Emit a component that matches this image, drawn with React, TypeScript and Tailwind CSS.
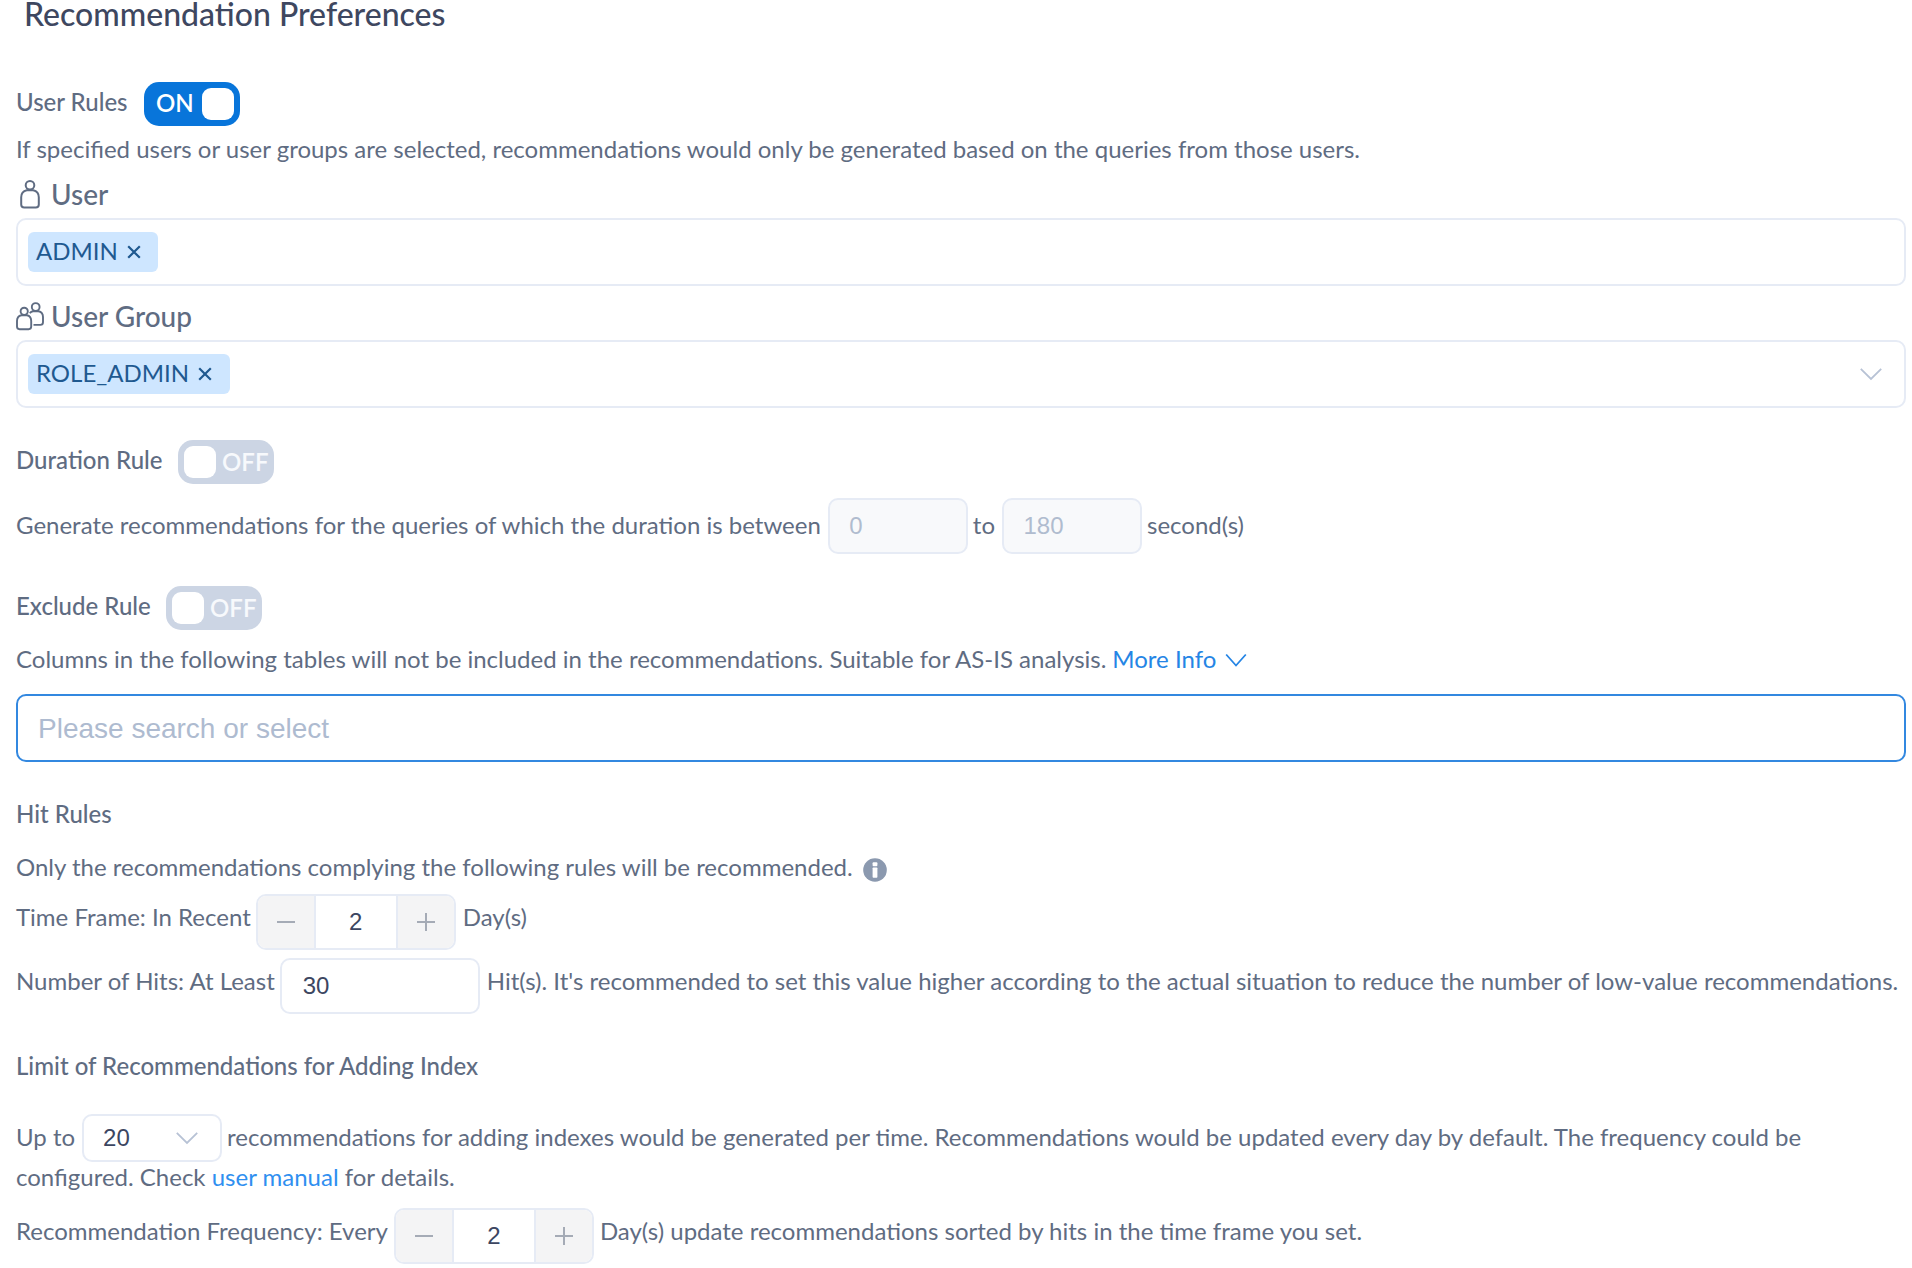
import type { ReactNode } from "react";

function Switch({ on = false }: { on?: boolean }) {
  return on ? (
    <span className="flex h-11 w-24 shrink-0 items-center justify-between rounded-[15px] bg-[#0875da] pr-1.5 pl-[12px] text-[24px] leading-[42px] font-semibold text-white">
      <span className="-mt-0.5">ON</span>
      <span className="size-8 rounded-[9px] bg-white" />
    </span>
  ) : (
    <span className="flex h-11 w-24 shrink-0 items-center rounded-[15px] bg-[#ccd5e4] pl-1.5 text-[24px] leading-[42px] font-semibold text-[#f7f9fc]">
      <span className="mr-[6px] size-8 shrink-0 rounded-[9px] bg-white" />
      <span>OFF</span>
    </span>
  );
}

function Tag({ children }: { children: ReactNode }) {
  return (
    <span className="flex h-10 items-center rounded-md bg-[#cee6ff] pr-[16.500px] pl-2 text-[24px] leading-[38px] text-[#1f5990]">
      <span className="-mt-0.5">{children}</span>
      <svg className="ml-[8px]" width="16" height="16" viewBox="0 0 16 16" fill="none" stroke="currentColor" strokeWidth="2.2">
        <path d="M2.200 2.200l11.600 11.600M13.800 2.200L2.200 13.800" />
      </svg>
    </span>
  );
}

function Chevron({ className = "" }: { className?: string }) {
  return (
    <svg className={className} width="24" height="16" viewBox="0 0 24 16" fill="none" stroke="currentColor" strokeWidth="1.8">
      <path d="M1.800 2.800L12 13L22.200 2.800" />
    </svg>
  );
}

function UserIcon() {
  return (
    <svg className="mr-[7px] shrink-0" width="28" height="32" viewBox="0 0 28 32" fill="none" stroke="currentColor" strokeWidth="2">
      <circle cx="14" cy="7.300" r="4.300" />
      <path d="M10.800 12.200C7.400 12.900 5.200 15.500 5.200 19.300V26.500Q5.200 29.500 8.200 29.500H19.800Q22.800 29.500 22.800 26.500V19.300C22.800 15.500 20.600 12.900 17.200 12.200Z" />
    </svg>
  );
}

function GroupIcon() {
  return (
    <svg className="mr-[7px] shrink-0" width="28" height="32" viewBox="0 0 28 32" fill="none" stroke="currentColor" strokeWidth="1.9">
      <circle cx="8.200" cy="11.300" r="3.600" />
      <path d="M5.500 15.300C2.700 15.900 1 18 1 21V26.600Q1 29.200 3.600 29.200H12.600Q15.200 29.200 15.200 26.600V21C15.200 18 13.700 15.900 10.900 15.300Z" />
      <circle cx="19.700" cy="7" r="3.900" />
      <path d="M13.800 13.200C14.700 12 15.700 11.500 17 11.300H22.400C25.400 11.900 27 14.100 27 17.100V22.300Q27 24.900 24.400 24.900H17.500" />
    </svg>
  );
}

function Stepper({ value }: { value: number }) {
  return (
    <span className="flex h-14 w-[200px] shrink-0 overflow-hidden rounded-[10px] border-2 border-[#e6ebf5] font-['Liberation_Sans',sans-serif] text-[24px] leading-[52px] text-[#3c4661]">
      <span className="flex w-[58px] items-center justify-center border-r-2 border-[#e6ebf5] bg-[#f4f4f5] text-[#a5abb6]">
        <svg width="20" height="20" viewBox="0 0 20 20" stroke="currentColor" strokeWidth="2"><path d="M1 10h18" /></svg>
      </span>
      <span className="flex-1 text-center">{value}</span>
      <span className="flex w-[58px] items-center justify-center border-l-2 border-[#e6ebf5] bg-[#f4f4f5] text-[#a5abb6]">
        <svg width="20" height="20" viewBox="0 0 20 20" stroke="currentColor" strokeWidth="2"><path d="M1 10h18M10 1v18" /></svg>
      </span>
    </span>
  );
}

function DisabledInput({ value }: { value: string }) {
  return (
    <span className="h-14 w-[140px] shrink-0 rounded-[10px] border-2 border-[#e6ebf5] bg-[#f8f9fb] pl-[19.500px] font-['Liberation_Sans',sans-serif] leading-[52px] text-[#b0bccf]">
      {value}
    </span>
  );
}

export default function App() {
  return (
    <main className="flex h-[1268px] w-[1912px] flex-col overflow-hidden bg-white pr-[6px] pl-4 font-['Lato',sans-serif] text-[24px] leading-8 whitespace-nowrap text-[#5f6c82]">
      <h1 className="pl-2 text-[32px] leading-[28px] font-medium text-[#3e4760]">Recommendation Preferences</h1>

      <div className="mt-[54px] flex h-11 items-start font-medium">
        <span className="mt-[4px] w-32">User Rules</span>
        <Switch on />
      </div>
      <p className="mt-[7px]">
        If specified users or user groups are selected, recommendations would only be generated based on the queries from those users.
      </p>
      <div className="mt-[13px] flex text-[28px] font-medium">
        <UserIcon />
        <span>User</span>
      </div>
      <div className="mt-2 flex h-[68px] items-center rounded-[10px] border-2 border-[#e6ebf5] px-[10px]">
        <Tag>ADMIN</Tag>
      </div>
      <div className="mt-[14px] flex text-[28px] font-medium">
        <GroupIcon />
        <span>User Group</span>
      </div>
      <div className="mt-2 flex h-[68px] items-center justify-between rounded-[10px] border-2 border-[#e6ebf5] pr-[21px] pl-[10px]">
        <Tag>ROLE_ADMIN</Tag>
        <Chevron className="text-[#b7c2d5]" />
      </div>

      <div className="mt-8 flex h-11 items-start font-medium">
        <span className="mt-[4px] w-[162px]">Duration Rule</span>
        <Switch />
      </div>
      <div className="mt-[14px] flex h-14 items-start">
        <span className="mt-[11px] mr-[7px]">Generate recommendations for the queries of which the duration is between</span>
        <DisabledInput value="0" />
        <span className="mt-[11px] mr-[7px] ml-[5px]">to</span>
        <DisabledInput value="180" />
        <span className="mt-[11px] ml-[5px]">second(s)</span>
      </div>

      <div className="mt-8 flex h-11 items-start font-medium">
        <span className="mt-[4px] w-[150px]">Exclude Rule</span>
        <Switch />
      </div>
      <div className="mt-[13px] flex items-center">
        <span>Columns in the following tables will not be included in the recommendations. Suitable for AS-IS analysis.</span>
        <a className="ml-[6px] flex items-center text-[#2585e5]">
          More Info
          <svg className="mt-0.5 ml-[9px]" width="22" height="16" viewBox="0 0 22 16" fill="none" stroke="currentColor" strokeWidth="1.8">
            <path d="M1.200 2.500L11 13.500L20.800 2.500" />
          </svg>
        </a>
      </div>
      <div className="mt-[19px] flex h-[68px] items-center rounded-[10px] border-2 border-[#3388e0] pt-0.5 pl-5 font-['Liberation_Sans',sans-serif] text-[28px] text-[#aebbd0]">
        Please search or select
      </div>

      <p className="mt-[36px] font-medium">Hit Rules</p>
      <div className="mt-[21px] flex items-center">
        <span>Only the recommendations complying the following rules will be recommended.</span>
        <svg className="mt-[5px] ml-[10px]" width="24" height="24" viewBox="0 0 25 25">
          <circle cx="12.500" cy="12.500" r="12.300" fill="#8b99af" />
          <rect x="10" y="4.500" width="5" height="4" rx="1" fill="#fff" />
          <rect x="10" y="10" width="5" height="10.500" rx="0.800" fill="#fff" />
        </svg>
      </div>
      <div className="mt-[11px] flex h-14 items-start">
        <span className="mt-[7px] mr-[5px]">Time Frame: In Recent</span>
        <Stepper value={2} />
        <span className="mt-[7px] ml-[7px]">Day(s)</span>
      </div>
      <div className="mt-2 flex h-14 items-start">
        <span className="mt-[7px] mr-[5px]">Number of Hits: At Least</span>
        <span className="h-14 w-[200px] shrink-0 rounded-[10px] border-2 border-[#e6ebf5] pl-[21px] font-['Liberation_Sans',sans-serif] leading-[52px] text-[#3c4661]">30</span>
        <span className="mt-[7px] ml-[7px]">
          Hit(s). It's recommended to set this value higher according to the actual situation to reduce the number of low-value recommendations.
        </span>
      </div>

      <p className="mt-[36px] font-medium">Limit of Recommendations for Adding Index</p>
      <div className="mt-8 flex h-12 items-start">
        <span className="mt-[7px] mr-[7px]">Up to</span>
        <span className="flex h-12 w-[140px] shrink-0 items-center justify-between rounded-[10px] border-2 border-[#e6ebf5] pr-[21px] pl-[19px] font-['Liberation_Sans',sans-serif] leading-[44px] text-[#3c4661]">
          20
          <Chevron className="text-[#b7c2d5]" />
        </span>
        <span className="mt-[7px] ml-[5px]">
          recommendations for adding indexes would be generated per time. Recommendations would be updated every day by default. The frequency could be
        </span>
      </div>
      <p className="-mt-px">
        configured. Check <a className="text-[#2f8ff0]">user manual</a> for details.
      </p>
      <div className="mt-[15px] flex h-14 items-start">
        <span className="mt-[7px] mr-[6px]">Recommendation Frequency: Every</span>
        <Stepper value={2} />
        <span className="mt-[7px] ml-[6px]">Day(s) update recommendations sorted by hits in the time frame you set.</span>
      </div>
    </main>
  );
}
